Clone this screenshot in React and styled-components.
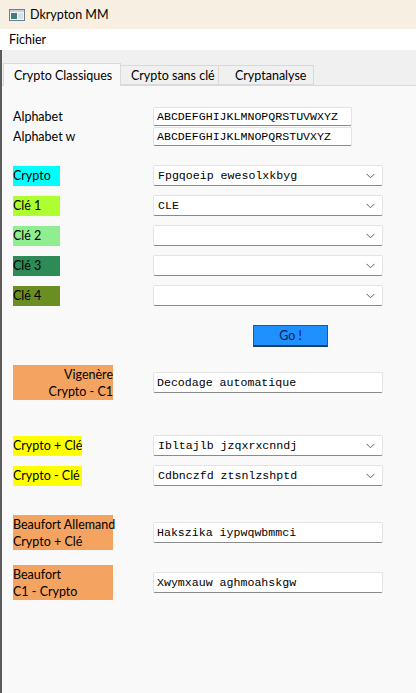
import styled, { createGlobalStyle } from "styled-components";

const GlobalStyle = createGlobalStyle`
  html, body {
    margin: 0;
    padding: 0;
    background: #f9f9f9;
  }
  body {
    font-family: Lato, "Liberation Sans", sans-serif;
    font-size: 12.5px;
    color: #000;
  }
`;

const Window = styled.div`
  width: 416px;
  height: 693px;
  display: flex;
  flex-direction: column;
  overflow: hidden;
`;

const TitleBar = styled.div`
  height: 29px;
  flex: none;
  background: #f7efe2;
  display: flex;
  align-items: center;
  padding-left: 9px;
  gap: 5px;
  font-size: 12.5px;
`;

const MenuBar = styled.div`
  height: 21px;
  flex: none;
  background: #fff;
  display: flex;
  align-items: center;
  padding-left: 9px;
`;

const Body = styled.div`
  flex: 1;
  display: flex;
  flex-direction: column;
  border-left: 2px solid #5b5b5b;
`;

const TabStrip = styled.div`
  height: 35px;
  flex: none;
  background: #f0f0f0;
  display: flex;
  align-items: flex-end;
  padding-left: 1px;
  border-bottom: 1px solid #dadada;
`;

const Tab = styled.div`
  height: ${(p) => (p.$active ? "23px" : "20px")};
  margin-bottom: ${(p) => (p.$active ? "-1px" : "0")};
  box-sizing: border-box;
  padding-left: ${(p) => p.$pad}px;
  display: flex;
  align-items: center;
  white-space: nowrap;
  background: ${(p) => (p.$active ? "#f9f9f9" : "#f0f0f0")};
  border: 1px solid #d9d9d9;
  border-bottom: ${(p) => (p.$active ? "none" : "1px solid #d9d9d9")};
  border-left: ${(p) => (p.$first ? "1px solid #d9d9d9" : "none")};
  width: ${(p) => p.$w}px;
`;

const Panel = styled.div`
  flex: 1;
  background: #f9f9f9;
  padding: 0 0 0 11px;
  display: flex;
  flex-direction: column;
`;

const Row = styled.div`
  display: grid;
  grid-template-columns: 140px auto;
  align-items: center;
  margin-top: ${(p) => p.$gap}px;
`;

const PlainLabel = styled.div`
  line-height: 18px;
  white-space: nowrap;
`;

const ColorLabel = styled.div`
  background: ${(p) => p.$bg};
  width: ${(p) => p.$w}px;
  height: ${(p) => (p.$tall ? 35 : 20)}px;
  display: flex;
  flex-direction: column;
  justify-content: center;
  align-items: ${(p) => (p.$right ? "flex-end" : "flex-start")};
  line-height: 17px;
  white-space: nowrap;
  box-sizing: border-box;
`;

const Field = styled.div`
  width: ${(p) => p.$w}px;
  height: ${(p) => p.$h}px;
  box-sizing: border-box;
  background: #fff;
  border: 1px solid #e3e3e3;
  border-bottom: 1px solid #8a8a8a;
  border-radius: 2px;
  display: flex;
  align-items: center;
  justify-content: space-between;
  padding: 0 7px 0 ${(p) => p.$pl}px;
  font-family: "Liberation Mono", "Courier New", monospace;
  font-size: 11.6px;
  white-space: pre;
`;

const GoButton = styled.div`
  margin-left: 100px;
  width: 75px;
  height: 22px;
  box-sizing: border-box;
  background: #1e90ff;
  border: 1px solid #1c5b94;
  border-bottom: 2px solid #183f66;
  display: flex;
  align-items: center;
  justify-content: center;
  color: #0c1a4a;
`;

function AppIcon() {
  return (
    <svg width="16" height="12" viewBox="0 0 16 12">
      <rect x="0.5" y="0.5" width="15" height="11" fill="#f4f4f4" stroke="#6b7f8f" />
      <rect x="1" y="1" width="14" height="2" fill="#c9d3db" />
      <rect x="2" y="4" width="6" height="6" fill="#3f7f74" />
      <rect x="9" y="4" width="5" height="6" fill="#d8e0e6" />
    </svg>
  );
}

function Chevron() {
  return (
    <svg width="9" height="6" viewBox="0 0 9 6">
      <path d="M0.5 0.8 L4.5 4.8 L8.5 0.8" fill="none" stroke="#606060" strokeWidth="1" />
    </svg>
  );
}

function Combo({ value }) {
  return (
    <Field $w={230} $h={21} $pl={4}>
      <span>{value}</span>
      <Chevron />
    </Field>
  );
}

function TextBox({ value, w = 230, h = 21, pl = 3 }) {
  return (
    <Field $w={w} $h={h} $pl={pl}>
      <span>{value}</span>
    </Field>
  );
}

export default function App() {
  return (
    <>
      <GlobalStyle />
      <Window>
        <TitleBar>
          <AppIcon />
          <span>Dkrypton MM</span>
        </TitleBar>
        <MenuBar>Fichier</MenuBar>
        <Body>
          <TabStrip>
            <Tab $active $first $w={118} $pad={10}>Crypto Classiques</Tab>
            <Tab $w={98} $pad={10}>Crypto sans clé</Tab>
            <Tab $w={95} $pad={16}>Cryptanalyse</Tab>
          </TabStrip>
          <Panel>
            <Row $gap={21}>
              <PlainLabel>Alphabet</PlainLabel>
              <TextBox value="ABCDEFGHIJKLMNOPQRSTUVWXYZ" w={199} h={19} />
            </Row>
            <Row $gap={1}>
              <PlainLabel>Alphabet w</PlainLabel>
              <TextBox value="ABCDEFGHIJKLMNOPQRSTUVXYZ" w={199} h={19} />
            </Row>

            <Row $gap={19}>
              <ColorLabel $bg="#00ffff" $w={47}>Crypto</ColorLabel>
              <Combo value="Fpgqoeip ewesolxkbyg" />
            </Row>
            <Row $gap={9}>
              <ColorLabel $bg="#adff2f" $w={47}>Clé 1</ColorLabel>
              <Combo value="CLE" />
            </Row>
            <Row $gap={9}>
              <ColorLabel $bg="#90ee90" $w={47}>Clé 2</ColorLabel>
              <Combo value="" />
            </Row>
            <Row $gap={9}>
              <ColorLabel $bg="#2e8b57" $w={47}>Clé 3</ColorLabel>
              <Combo value="" />
            </Row>
            <Row $gap={9}>
              <ColorLabel $bg="#6b8e23" $w={47}>Clé 4</ColorLabel>
              <Combo value="" />
            </Row>

            <Row $gap={19}>
              <span />
              <GoButton>Go !</GoButton>
            </Row>

            <Row $gap={18}>
              <ColorLabel $bg="#f4a460" $w={100} $tall $right>
                <span>Vigenère</span>
                <span>Crypto - C1</span>
              </ColorLabel>
              <TextBox value="Decodage automatique" />
            </Row>

            <Row $gap={35}>
              <ColorLabel $bg="#ffff00" $w={69}>Crypto + Clé</ColorLabel>
              <Combo value="Ibltajlb jzqxrxcnndj" />
            </Row>
            <Row $gap={9}>
              <ColorLabel $bg="#ffff00" $w={69}>Crypto - Clé</ColorLabel>
              <Combo value="Cdbnczfd ztsnlzshptd" />
            </Row>

            <Row $gap={29}>
              <ColorLabel $bg="#f4a460" $w={100} $tall>
                <span>Beaufort Allemand</span>
                <span>Crypto + Clé</span>
              </ColorLabel>
              <TextBox value="Hakszika iypwqwbmmci" />
            </Row>
            <Row $gap={15}>
              <ColorLabel $bg="#f4a460" $w={100} $tall>
                <span>Beaufort</span>
                <span>C1 - Crypto</span>
              </ColorLabel>
              <TextBox value="Xwymxauw aghmoahskgw" />
            </Row>
          </Panel>
        </Body>
      </Window>
    </>
  );
}
